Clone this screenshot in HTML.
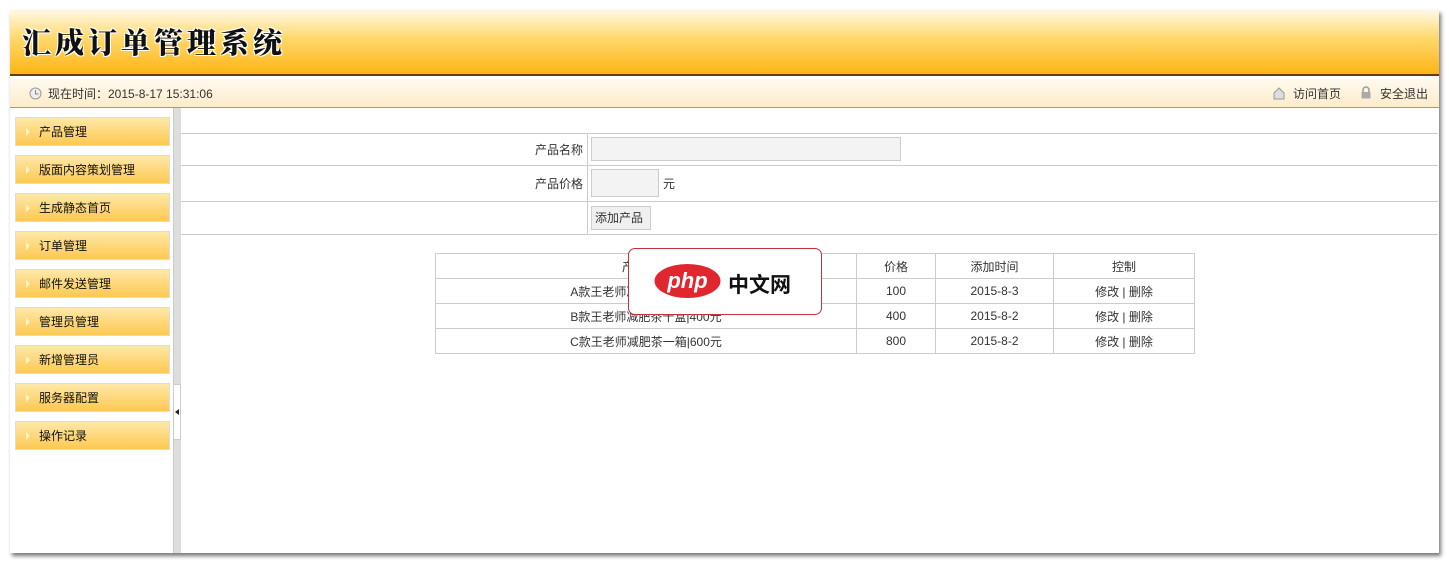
<!DOCTYPE html>
<html><head><meta charset="utf-8"><style>
*{margin:0;padding:0;box-sizing:border-box}
body{width:1449px;height:565px;background:#fff;font-family:"Liberation Sans","Noto Sans CJK SC",sans-serif;font-size:12px;color:#333;position:relative;overflow:hidden}
.a{position:absolute}
#frame{left:10px;top:10px;width:1429px;height:543px;background:#fff;box-shadow:2px 3px 4px #777}
#hdr{left:10px;top:10px;width:1429px;height:66px;background:linear-gradient(#fff8e6 0%,#ffd86a 45%,#fdb514 100%);border-bottom:2px solid #6b3a00}
#title{left:22px;top:21px;font-family:"Noto Serif CJK SC",serif;font-weight:900;font-size:29px;color:#111;letter-spacing:4px;text-shadow:1px 1px 0 #fff,-1px -1px 0 #fff,1px -1px 0 #fff,-1px 1px 0 #fff}
#bar{left:10px;top:78px;width:1429px;height:30px;background:linear-gradient(#fffaf0,#fdeccb);border-bottom:1px solid #aa9a80}
#side{left:173px;top:108px;width:8px;height:445px;background:#ddd;border-left:1px solid #ccc}
.m{position:absolute;left:15px;width:155px;height:29px;border:1px solid #ddd;background:linear-gradient(#ffe8a8,#fdc850);font-size:12px;color:#111;padding:5px 0 0 23px}
.m:before{content:"";position:absolute;left:10px;top:10px;border-left:4px solid #fff4d0;border-top:4px solid transparent;border-bottom:4px solid transparent}
.hl{position:absolute;left:181px;width:1257px;height:1px;background:#ccc}
table{border-collapse:collapse;position:absolute;left:435px;top:253px;width:760px}
td{border:1px solid #ccc;height:25px;text-align:center;font-size:12px;color:#333}
</style></head><body>
<div id="frame" class="a"></div>
<div id="hdr" class="a"></div>
<div id="title" class="a">汇成订单管理系统</div>
<div id="bar" class="a"></div>
<svg class="a" style="left:29px;top:87px" width="13" height="13"><circle cx="6.5" cy="6.5" r="5.5" fill="#eee" stroke="#999"/><path d="M6.5 3v4h3" stroke="#888" fill="none"/></svg>
<div class="a" style="left:48px;top:85px;font-size:12px;color:#333">现在时间：2015-8-17 15:31:06</div>
<svg class="a" style="left:1273px;top:87px" width="12" height="13"><path d="M1 6L6 1L11 6V12H1Z" fill="#ddd" stroke="#999"/></svg>
<div class="a" style="left:1293px;top:85px">访问首页</div>
<svg class="a" style="left:1360px;top:86px" width="12" height="13"><path d="M3 6V4a3 3 0 0 1 6 0v2" stroke="#999" fill="none" stroke-width="1.5"/><rect x="1.5" y="6" width="9" height="6.5" fill="#aaa"/></svg>
<div class="a" style="left:1380px;top:85px">安全退出</div>
<div id="side" class="a"></div>
<div class="a" style="left:174px;top:384px;width:7px;height:56px;background:#fff;border:1px solid #ccc;border-left:none"></div>
<div class="a" style="left:175px;top:409px;border-right:4px solid #222;border-top:3px solid transparent;border-bottom:3px solid transparent"></div>
<div class="m" style="top:117px">产品管理</div>
<div class="m" style="top:155px">版面内容策划管理</div>
<div class="m" style="top:193px">生成静态首页</div>
<div class="m" style="top:231px">订单管理</div>
<div class="m" style="top:269px">邮件发送管理</div>
<div class="m" style="top:307px">管理员管理</div>
<div class="m" style="top:345px">新增管理员</div>
<div class="m" style="top:383px">服务器配置</div>
<div class="m" style="top:421px">操作记录</div>
<div class="hl" style="top:133px"></div>
<div class="hl" style="top:165px"></div>
<div class="hl" style="top:201px"></div>
<div class="hl" style="top:234px"></div>
<div class="a" style="left:587px;top:133px;width:1px;height:101px;background:#ccc"></div>
<div class="a" style="left:535px;top:141px">产品名称</div>
<div class="a" style="left:535px;top:175px">产品价格</div>
<div class="a" style="left:591px;top:137px;width:310px;height:24px;background:#f3f3f3;border:1px solid #ccc"></div>
<div class="a" style="left:591px;top:169px;width:68px;height:28px;background:#f3f3f3;border:1px solid #ccc"></div>
<div class="a" style="left:663px;top:175px">元</div>
<div class="a" style="left:591px;top:206px;width:60px;height:24px;background:#f0f0f0;border:1px solid #ccc;padding:2px 0 0 3px">添加产品</div>
<table>
<tr><td style="width:421px">产品名称</td><td style="width:79px">价格</td><td style="width:118px">添加时间</td><td>控制</td></tr>
<tr><td>A款王老师减肥茶一盒|100元</td><td>100</td><td>2015-8-3</td><td>修改 | 删除</td></tr>
<tr><td>B款王老师减肥茶十盒|400元</td><td>400</td><td>2015-8-2</td><td>修改 | 删除</td></tr>
<tr><td>C款王老师减肥茶一箱|600元</td><td>800</td><td>2015-8-2</td><td>修改 | 删除</td></tr>
</table>
<div class="a" style="left:628px;top:248px;width:194px;height:67px;background:#fff;border:1px solid #c8303a;border-radius:7px"></div>
<svg class="a" style="left:654px;top:263px" width="67" height="36"><ellipse cx="33.5" cy="18" rx="33" ry="17" fill="#e0262e"/><text x="33.5" y="25" text-anchor="middle" font-family="Liberation Sans" font-style="italic" font-weight="bold" font-size="22" fill="#fff">php</text></svg>
<div class="a" style="left:728px;top:269px;font-size:21px;color:#111;font-weight:bold">中文网</div>
</body></html>
